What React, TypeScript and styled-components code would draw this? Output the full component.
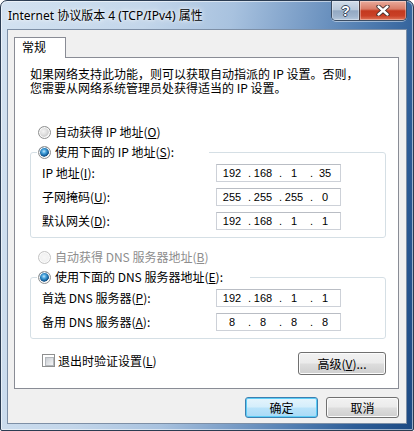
import React from "react";
import styled, { createGlobalStyle } from "styled-components";

const CJK = `"Noto Sans CJK SC", "Noto Sans", sans-serif`;
const UI = `"Noto Sans", "Noto Sans CJK SC", sans-serif`;

const GlobalStyle = createGlobalStyle`
  html, body { margin: 0; padding: 0; background: #ffffff; }
  * { box-sizing: border-box; }
`;

const Window = styled.div`
  width: 414px;
  height: 431px;
  display: flex;
  flex-direction: column;
  border: 1px solid #2b3c52;
  border-radius: 7px 7px 2px 2px;
  background: linear-gradient(
    100deg,
    #d3e2f1 0%,
    #c3d6ea 30%,
    #a8c2df 48%,
    #7c9fc8 62%,
    #4f7cb0 76%,
    #2d5d97 88%,
    #1d4a83 100%
  );
  box-shadow: inset 0 0 0 1px rgba(255, 255, 255, 0.55);
  font-family: ${CJK};
  color: #000;
  overflow: hidden;
`;

const TitleBar = styled.div`
  height: 28px;
  display: flex;
  align-items: flex-start;
`;

const Title = styled.div`
  flex: 1;
  margin-top: 7px;
  padding-left: 7px;
  font-family: ${UI};
  font-size: 12px;
  line-height: 16px;
  white-space: nowrap;
  text-shadow: 0 0 6px rgba(255, 255, 255, 0.95), 0 0 3px rgba(255, 255, 255, 0.9);
`;

const CaptionGroup = styled.div`
  display: flex;
  margin-right: 6px;
  height: 20px;
  border: 1px solid #3a4c63;
  border-top: none;
  border-radius: 0 0 5px 5px;
  overflow: hidden;
  box-shadow: 0 1px 0 rgba(255, 255, 255, 0.45);
`;

const CaptionButton = styled.div<{ $close?: boolean }>`
  width: ${(p) => (p.$close ? 47 : 27)}px;
  height: 19px;
  display: flex;
  align-items: center;
  justify-content: center;
  border-left: ${(p) => (p.$close ? "1px solid #4a3a3a" : "none")};
  background: ${(p) =>
    p.$close
      ? "linear-gradient(#e9ab9c 0%, #d97c67 42%, #c4391f 52%, #c94026 78%, #e0765a 100%)"
      : "linear-gradient(#d0dce9 0%, #b9c9db 45%, #93a9c3 52%, #9fb4cc 80%, #b6c8dc 100%)"};
  box-shadow: inset 0 0 0 1px rgba(255, 255, 255, 0.35);
`;

const HelpGlyph = styled.span`
  font-family: "Liberation Sans", sans-serif;
  font-weight: bold;
  font-size: 14px;
  line-height: 14px;
  color: #ffffff;
  text-shadow: 1px 0 0 #34465c, -1px 0 0 #34465c, 0 1px 0 #34465c, 0 -1px 0 #34465c;
`;

const Client = styled.div`
  flex: 1;
  margin: 0 6px 6px 6px;
  border: 1px solid #7d8fa6;
  background: #f0f0f0;
  display: flex;
  flex-direction: column;
  padding: 7px 7px 5px 6px;
`;

const TabStrip = styled.div`
  height: 20px;
  display: flex;
  align-items: flex-start;
`;

const Tab = styled.div`
  position: relative;
  z-index: 1;
  width: 52px;
  height: 21px;
  padding: 0 7px;
  border: 1px solid #898c95;
  border-bottom: none;
  background: #ffffff;
  font-size: 12px;
  line-height: 18px;
`;

const Panel = styled.div`
  flex: 1;
  background: #ffffff;
  border: 1px solid #898c95;
  padding: 9px 12px 0 15px;
  display: flex;
  flex-direction: column;
`;

const Description = styled.p`
  margin: 0;
  font-size: 12px;
  line-height: 14px;
  white-space: nowrap;
`;

const RadioRow = styled.div<{ $disabled?: boolean; $gap?: number }>`
  height: 16px;
  display: flex;
  align-items: center;
  gap: 4px;
  padding-left: 8px;
  margin-top: ${(p) => p.$gap ?? 0}px;
  font-size: 12px;
  line-height: 16px;
  white-space: nowrap;
  color: ${(p) => (p.$disabled ? "#8d8d8d" : "#000")};
`;

const Radio = styled.span<{ $checked?: boolean; $disabled?: boolean }>`
  width: 13px;
  height: 13px;
  flex: none;
  border-radius: 50%;
  border: 1px solid ${(p) => (p.$disabled ? "#c4c4c4" : "#8e8f8f")};
  background: ${(p) =>
    p.$checked
      ? "radial-gradient(circle at 45% 40%, #c6e8fc 0px, #4aa6df 2px, #1c6aa6 4px, #0f4c80 5px, #f2f2f2 5.5px, #dcdcdc 100%)"
      : p.$disabled
      ? "radial-gradient(circle at 50% 50%, #f7f7f7 0px, #ececec 100%)"
      : "radial-gradient(circle at 40% 40%, #f4f4f4 0px, #e2e2e2 3px, #d0d0d0 5px, #f4f4f4 6px)"};
  box-shadow: inset 0 0 0 1px #fbfbfb;
`;

const Group = styled.fieldset`
  margin: 4px 0 0 0;
  padding: 0;
  min-width: 0;
  border: 1px solid #d5dfe5;
  border-radius: 3px;
`;

const Legend = styled.legend<{ $width: number }>`
  width: ${(p) => p.$width}px;
  margin-left: 6px;
  padding: 0 0 0 1px;
`;

const LegendRow = styled(RadioRow)`
  padding-left: 0;
`;

const GroupBody = styled.div`
  display: grid;
  grid-template-columns: 174px 125px;
  row-gap: 6px;
  align-items: center;
  padding: 4px 0 7px 11px;
`;

const FieldLabel = styled.label`
  font-size: 12px;
  line-height: 18px;
  white-space: nowrap;
`;

const Key = styled.span`
  text-decoration: underline;
`;

const IpField = styled.div`
  width: 125px;
  height: 18px;
  display: flex;
  padding-left: 3px;
  background: #ffffff;
  border: 1px solid #cdd1d8;
  border-top-color: #b9bdc4;
  font-family: "Liberation Sans", Arial, sans-serif;
  font-size: 11px;
  line-height: 16px;
`;

const Octet = styled.span`
  width: 24px;
  text-align: center;
`;

const Dot = styled.span`
  width: 7px;
  text-align: right;
`;

const BottomRow = styled.div`
  margin-top: 13px;
  display: flex;
  justify-content: space-between;
  align-items: flex-start;
  padding-left: 12px;
`;

const CheckLabel = styled.label`
  margin-top: 2px;
  display: flex;
  align-items: center;
  gap: 3px;
  font-size: 12px;
  line-height: 13px;
  white-space: nowrap;
`;

const CheckBox = styled.span`
  width: 13px;
  height: 13px;
  flex: none;
  border: 1px solid #8e8f8f;
  background: #ffffff;
  padding: 2px;
  &::after {
    content: "";
    display: block;
    width: 100%;
    height: 100%;
    background: linear-gradient(135deg, #c9cdd2 0%, #e3e5e8 60%, #f5f5f5 100%);
    border: 1px solid #b4b8bd;
  }
`;

const Button = styled.button<{ $default?: boolean; $width: number; $height: number }>`
  width: ${(p) => p.$width}px;
  height: ${(p) => p.$height}px;
  padding: 0;
  margin: 0;
  font-family: ${CJK};
  font-size: 12px;
  line-height: 14px;
  color: #000;
  border-radius: 3px;
  border: 1px solid ${(p) => (p.$default ? "#3c7fb1" : "#707070")};
  background: ${(p) =>
    p.$default
      ? "linear-gradient(#e5f4fc 0%, #d4eefb 48%, #b9e3fa 52%, #a9daf6 100%)"
      : "linear-gradient(#f2f2f2 0%, #ebebeb 48%, #dddddd 52%, #cfcfcf 100%)"};
  box-shadow: inset 0 0 0 1px ${(p) => (p.$default ? "#5ccdf6" : "#fcfcfc")};
  white-space: nowrap;
`;

const ButtonRow = styled.div`
  margin-top: 8px;
  display: flex;
  justify-content: flex-end;
  gap: 8px;
`;

const IpAddress: React.FC<{ parts: string[] }> = ({ parts }) => (
  <IpField>
    {parts.map((p, i) => (
      <React.Fragment key={i}>
        <Octet>{p}</Octet>
        {i < parts.length - 1 && <Dot>.</Dot>}
      </React.Fragment>
    ))}
  </IpField>
);

export default function App() {
  return (
    <>
      <GlobalStyle />
      <Window>
        <TitleBar>
          <Title>Internet 协议版本 4 (TCP/IPv4) 属性</Title>
          <CaptionGroup>
            <CaptionButton>
              <HelpGlyph>?</HelpGlyph>
            </CaptionButton>
            <CaptionButton $close>
              <svg width="14" height="11" viewBox="0 0 14 11">
                <path d="M2.5 1.5 L11.5 9.5 M11.5 1.5 L2.5 9.5" stroke="#3a2a2a" strokeWidth="4.2" strokeLinecap="round" fill="none" />
                <path d="M2.5 1.5 L11.5 9.5 M11.5 1.5 L2.5 9.5" stroke="#ffffff" strokeWidth="2.4" strokeLinecap="round" fill="none" />
              </svg>
            </CaptionButton>
          </CaptionGroup>
        </TitleBar>
        <Client>
          <TabStrip>
            <Tab>常规</Tab>
          </TabStrip>
          <Panel>
            <Description>
              如果网络支持此功能，则可以获取自动指派的 IP 设置。否则，
              <br />
              您需要从网络系统管理员处获得适当的 IP 设置。
            </Description>

            <RadioRow $gap={29}>
              <Radio />
              <span>
                自动获得 IP 地址(<Key>O</Key>)
              </span>
            </RadioRow>

            <Group>
              <Legend $width={172}>
                <LegendRow>
                  <Radio $checked />
                  <span>
                    使用下面的 IP 地址(<Key>S</Key>):
                  </span>
                </LegendRow>
              </Legend>
              <GroupBody>
                <FieldLabel>
                  IP 地址(<Key>I</Key>):
                </FieldLabel>
                <IpAddress parts={["192", "168", "1", "35"]} />
                <FieldLabel>
                  子网掩码(<Key>U</Key>):
                </FieldLabel>
                <IpAddress parts={["255", "255", "255", "0"]} />
                <FieldLabel>
                  默认网关(<Key>D</Key>):
                </FieldLabel>
                <IpAddress parts={["192", "168", "1", "1"]} />
              </GroupBody>
            </Group>

            <RadioRow $gap={11} $disabled>
              <Radio $disabled />
              <span>
                自动获得 DNS 服务器地址(<Key>B</Key>)
              </span>
            </RadioRow>

            <Group>
              <Legend $width={213}>
                <LegendRow>
                  <Radio $checked />
                  <span>
                    使用下面的 DNS 服务器地址(<Key>E</Key>):
                  </span>
                </LegendRow>
              </Legend>
              <GroupBody>
                <FieldLabel>
                  首选 DNS 服务器(<Key>P</Key>):
                </FieldLabel>
                <IpAddress parts={["192", "168", "1", "1"]} />
                <FieldLabel>
                  备用 DNS 服务器(<Key>A</Key>):
                </FieldLabel>
                <IpAddress parts={["8", "8", "8", "8"]} />
              </GroupBody>
            </Group>

            <BottomRow>
              <CheckLabel>
                <CheckBox />
                <span>
                  退出时验证设置(<Key>L</Key>)
                </span>
              </CheckLabel>
              <Button $width={88} $height={23}>
                高级(<Key>V</Key>)...
              </Button>
            </BottomRow>
          </Panel>
          <ButtonRow>
            <Button $default $width={73} $height={21}>
              确定
            </Button>
            <Button $width={73} $height={21}>
              取消
            </Button>
          </ButtonRow>
        </Client>
      </Window>
    </>
  );
}
